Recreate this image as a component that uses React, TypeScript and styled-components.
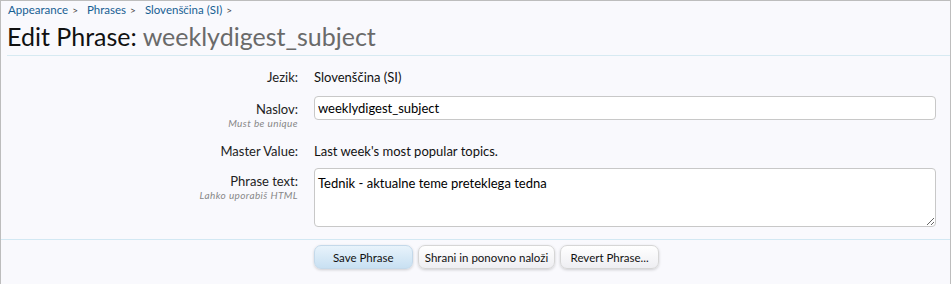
import styled, { createGlobalStyle } from "styled-components";

const GlobalStyle = createGlobalStyle`
  html, body {
    margin: 0;
    padding: 0;
    background: #ffffff;
  }
  body {
    font-family: Lato, "Open Sans", sans-serif;
    color: #000;
  }
`;

const rows = [
  { label: "Jezik:", kind: "text", value: "Slovenščina (SI)", after: 6 },
  { label: "Naslov:", hint: "Must be unique", kind: "input", value: "weeklydigest_subject", after: 9 },
  { label: "Master Value:", kind: "text", value: "Last week's most popular topics.", after: 4 },
  {
    label: "Phrase text:",
    hint: "Lahko uporabiš HTML",
    kind: "textarea",
    value: "Tednik - aktualne teme preteklega tedna",
    after: 0,
  },
];

const App = () => {
  return (
    <>
      <GlobalStyle />
      <StyledFrame>
        <StyledCrumbs>
          <a>Appearance</a>
          <span>&gt;</span>
          <a>Phrases</a>
          <span>&gt;</span>
          <a>Slovenščina (SI)</a>
          <span>&gt;</span>
        </StyledCrumbs>
        <StyledTitle>
          Edit Phrase: <em>weeklydigest_subject</em>
        </StyledTitle>

        <StyledForm>
          {rows.map((row) => (
            <StyledRow key={row.label} $after={row.after}>
              <StyledLabel>
                <span>{row.label}</span>
                {row.hint && <small>{row.hint}</small>}
              </StyledLabel>
              <StyledControl>
                {row.kind === "text" && <StyledValue>{row.value}</StyledValue>}
                {row.kind === "input" && <StyledInput defaultValue={row.value} />}
                {row.kind === "textarea" && <StyledTextarea defaultValue={row.value} />}
              </StyledControl>
            </StyledRow>
          ))}
        </StyledForm>

        <StyledSubmit>
          <StyledButton $primary>Save Phrase</StyledButton>
          <StyledButton>Shrani in ponovno naloži</StyledButton>
          <StyledButton>Revert Phrase...</StyledButton>
        </StyledSubmit>
      </StyledFrame>
    </>
  );
};

export default App;

const StyledFrame = styled.div`
  width: 949px;
  height: 283px;
  border: 1px solid #bdbdbd;
  border-bottom-color: #c4c4c4;
  background: #f9f9fd;
  overflow: hidden;
`;

const StyledCrumbs = styled.div`
  display: flex;
  align-items: center;
  height: 17px;
  padding: 0 0 1px 7px;
  font-size: 11.5px;

  a {
    color: #176093;
  }

  span {
    color: #444;
    font-size: 10px;
    margin: 0 9px 0 4px;
  }
`;

const StyledTitle = styled.h1`
  margin: 0 0 0 6px;
  height: 36px;
  line-height: 34px;
  font-size: 25px;
  font-weight: normal;
  color: #111;
  border-bottom: 1px solid #d7eaf2;

  em {
    font-style: normal;
    color: #6a6a6a;
  }
`;

const StyledForm = styled.div`
  display: flex;
  flex-direction: column;
  padding: 8px 15px 0 6px;
  height: 175px;
  border-bottom: 1px solid #d2e8f3;
`;

const StyledRow = styled.div<{ $after: number }>`
  display: grid;
  grid-template-columns: 291px 1fr;
  column-gap: 16px;
  margin-bottom: ${(p) => p.$after}px;
`;

const StyledLabel = styled.div`
  display: flex;
  flex-direction: column;
  align-items: flex-end;
  padding-top: 5px;
  font-size: 13px;
  color: #222;

  span {
    line-height: 16px;
  }

  small {
    margin-top: 1px;
    font-size: 10px;
    line-height: 11px;
    font-style: italic;
    color: #888;
    letter-spacing: 0.4px;
  }
`;

const StyledControl = styled.div`
  display: flex;
`;

const StyledValue = styled.div`
  padding-top: 5px;
  font-size: 13px;
  line-height: 16px;
  color: #111;
  min-height: 26px;
  box-sizing: border-box;
`;

const StyledInput = styled.input`
  width: 622px;
  height: 24px;
  box-sizing: border-box;
  border: 1px solid #c8c8c8;
  border-radius: 4px;
  background: #fff;
  padding: 0 3px;
  font-family: Lato, "Open Sans", sans-serif;
  font-size: 13px;
  color: #000;
  outline: none;
`;

const StyledTextarea = styled.textarea`
  width: 622px;
  height: 59px;
  box-sizing: border-box;
  border: 1px solid #c8c8c8;
  border-radius: 4px;
  background: #fff;
  padding: 6px 3px 4px;
  font-family: Lato, "Open Sans", sans-serif;
  font-size: 13px;
  line-height: 16px;
  color: #000;
  outline: none;
  resize: vertical;
`;

const StyledSubmit = styled.div`
  display: flex;
  justify-content: center;
  gap: 5px;
  padding: 5px 0 0 22px;
`;

const StyledButton = styled.button<{ $primary?: boolean }>`
  height: 24px;
  min-width: 99px;
  padding: 0 6px;
  border: 1px solid ${(p) => (p.$primary ? "#c4d9ea" : "#d6d6d6")};
  border-radius: 7px;
  font-family: Lato, "Open Sans", sans-serif;
  font-size: 11.5px;
  color: #111;
  background: ${(p) =>
    p.$primary
      ? "linear-gradient(to bottom, #e8f3fb 0%, #c8e0f2 100%)"
      : "linear-gradient(to bottom, #ffffff 0%, #eeeef2 100%)"};
  box-shadow: 0 1px 3px rgba(0, 0, 0, 0.18);
`;
